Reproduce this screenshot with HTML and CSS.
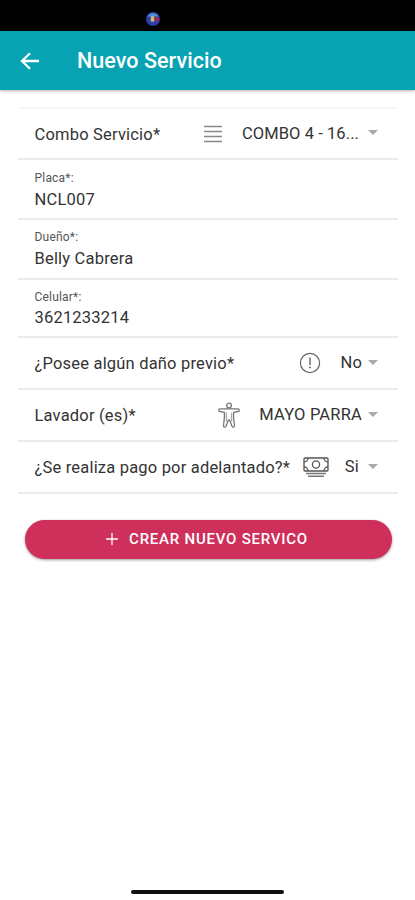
FILE: index.html
```html
<!DOCTYPE html>
<html lang="es">
<head>
    <meta charset="UTF-8">
    <meta name="viewport" content="width=device-width, initial-scale=1.0">
    <title>Nuevo Servicio</title>
    <link rel="stylesheet" href="styles.css">
</head>
<body>
    <div class="status-bar">
        <svg class="status-icon" viewBox="0 0 14 14">
            <circle cx="7" cy="7" r="7" fill="#2c3fa5"/>
            <path d="M1.5 4.5a6.3 6.3 0 0 1 11 0z" fill="#4a8fd6"/>
            <rect x="4.8" y="4.2" width="3.4" height="5.4" fill="#c9bd79"/>
            <rect x="8.6" y="5.2" width="4" height="3.8" fill="#b3203f"/>
        </svg>
    </div>
    <header class="toolbar">
        <svg class="back-icon" viewBox="0 0 20 18">
            <path d="M10 1.2L2 9l8 7.8M2.2 9H19" fill="none" stroke="#fff" stroke-width="2.3"/>
        </svg>
        <h1 class="title">Nuevo Servicio</h1>
    </header>
    <main class="content">
        <div class="list">
            <div class="item">
                <span class="label">Combo Servicio*</span>
                <svg class="icon icon-list" viewBox="0 0 18 18">
                    <path d="M0 1.5h18M0 6.5h18M0 11.5h18M0 16.5h18" stroke="#888" stroke-width="1.6"/>
                </svg>
                <span class="value value-combo">COMBO 4 - 16...</span>
                <i class="caret"></i>
            </div>
            <div class="item item-input">
                <label class="small-label">Placa*:</label>
                <span class="text">NCL007</span>
            </div>
            <div class="item item-input item-owner">
                <label class="small-label">Dueño*:</label>
                <span class="text">Belly Cabrera</span>
            </div>
            <div class="item item-input item-phone">
                <label class="small-label">Celular*:</label>
                <span class="text">3621233214</span>
            </div>
            <div class="item">
                <span class="label">¿Posee algún daño previo*</span>
                <svg class="icon icon-alert" viewBox="0 0 22 22">
                    <circle cx="11" cy="11" r="9.6" fill="none" stroke="#666" stroke-width="1.2"/>
                    <path d="M11 5.5v7.5" stroke="#555" stroke-width="1.3"/>
                    <circle cx="11" cy="15.4" r=".9" fill="#555"/>
                </svg>
                <span class="value">No</span>
                <i class="caret"></i>
            </div>
            <div class="item">
                <span class="label">Lavador (es)*</span>
                <svg class="icon icon-body" viewBox="0 0 22 26" fill="none" stroke="#777" stroke-width="1.3" stroke-linejoin="round">
                    <circle cx="11" cy="3.6" r="2.4"/>
                    <path d="M2 6.9h18a1.3 1.3 0 0 1 0 2.6l-4.4.8v5.4l.9 7.8a1.3 1.3 0 0 1-2.6.5L11.6 18h-1.2l-2.3 6a1.3 1.3 0 0 1-2.6-.5l.9-7.8v-5.4L2 9.5a1.3 1.3 0 0 1 0-2.6z"/>
                    <path d="M8.4 10.5v9M13.6 10.5v9" stroke="#aaa"/>
                </svg>
                <span class="value">MAYO PARRA</span>
                <i class="caret"></i>
            </div>
            <div class="item">
                <span class="label">¿Se realiza pago por adelantado?*</span>
                <svg class="icon icon-cash" viewBox="0 0 26 20" fill="none" stroke="#555" stroke-width="1.3">
                    <rect x="1" y="1" width="24" height="13" rx="1"/>
                    <circle cx="13" cy="7.5" r="3.6"/>
                    <path d="M1 5a4 4 0 0 0 4-4M21 1a4 4 0 0 0 4 4M1 10a4 4 0 0 1 4 4M21 14a4 4 0 0 1 4-4"/>
                    <path d="M3 16.6h20M5 19.2h16" stroke="#777" stroke-width="1.5"/>
                </svg>
                <span class="value value-si">Si</span>
                <i class="caret"></i>
            </div>
        </div>
        <button class="btn-create">
            <svg class="plus" viewBox="0 0 12 12">
                <path d="M6 0v12M0 6h12" stroke="#fff" stroke-width="1.3"/>
            </svg>
            <span class="btn-text">CREAR NUEVO SERVICO</span>
        </button>
    </main>
    <div class="home-bar"></div>
</body>
</html>
```
FILE: styles.css
```css
* {
    box-sizing: border-box;
}
body {
    display: flex;
    flex-direction: column;
    height: 900px;
    margin: 0;
    background: #fff;
    color: #333;
    font-family: Roboto, "Liberation Sans", sans-serif;
    font-size: 16.5px;
    letter-spacing: 0.19px;
    overflow: hidden;
}
.status-bar {
    flex: none;
    height: 31px;
    padding: 12px 0 0 146px;
    background: #000;
}
.status-icon {
    display: block;
    width: 14px;
    height: 14px;
}
.toolbar {
    flex: none;
    display: flex;
    align-items: center;
    height: 59px;
    padding-left: 20px;
    background: #07a3b2;
    box-shadow: 0 1px 3px rgba(0,0,0,0.3);
}
.back-icon {
    width: 20px;
    height: 18px;
    margin-top: 1px;
}
.title {
    margin: 0 0 0 37px;
    color: #fff;
    font-size: 21.5px;
    font-weight: 500;
    line-height: 24px;
    letter-spacing: 0.05px;
}
.content {
    flex: 1;
    padding: 17px 17px 0 18px;
}
.list {
    border-top: 2px solid #f7f7f5;
}
.item {
    display: flex;
    align-items: center;
    height: 52px;
    padding: 0 20px 0 16.5px;
    border-bottom: 2px solid #ebebeb;
    white-space: nowrap;
}
.item:first-child {
    height: 51px;
}
.item-input {
    flex-direction: column;
    align-items: flex-start;
    height: 60px;
    padding-top: 11px;
}
.item-owner {
    padding-top: 10px;
}
.item-phone {
    height: 58px;
    padding-top: 10px;
}
.label {
    margin-right: auto;
    padding-top: 1px;
}
.small-label {
    color: #555;
    font-size: 12px;
    line-height: 14px;
    letter-spacing: 0.2px;
}
.text {
    margin-top: 5px;
    line-height: 20px;
}
.item-phone .text {
    margin-top: 4px;
}
.icon {
    flex: none;
}
.icon-list {
    width: 18px;
    height: 18px;
    margin-right: 20px;
}
.icon-alert {
    width: 22px;
    height: 22px;
    margin-right: 19px;
}
.icon-body {
    width: 22px;
    height: 26px;
    margin-right: 19px;
}
.icon-cash {
    width: 26px;
    height: 20px;
    margin-right: 16px;
}
.value {
    padding-bottom: 1px;
}
.value-combo {
    margin-right: 3px;
    letter-spacing: 0.08px;
}
.value-si {
    margin-right: 3px;
}
.caret {
    width: 0;
    height: 0;
    margin: 0 0 2px 6px;
    border: 5px solid transparent;
    border-top-color: #aaa;
    border-bottom: 0;
}
.btn-create {
    display: flex;
    align-items: center;
    justify-content: center;
    width: 367px;
    height: 39px;
    margin: 26px 0 0 7px;
    padding: 0 9px 2px 6px;
    border: 0;
    border-radius: 20px;
    background: #cf2f5b;
    box-shadow: 0 1px 3px rgba(0,0,0,0.4);
    color: #fff;
    font-family: inherit;
    font-size: 15px;
    font-weight: 500;
    letter-spacing: 0.76px;
}
.plus {
    width: 12px;
    height: 12px;
    margin-right: 11px;
}
.home-bar {
    flex: none;
    width: 153px;
    height: 4px;
    margin: 0 0 6px 131px;
    border-radius: 2px;
    background: #111;
}
```
